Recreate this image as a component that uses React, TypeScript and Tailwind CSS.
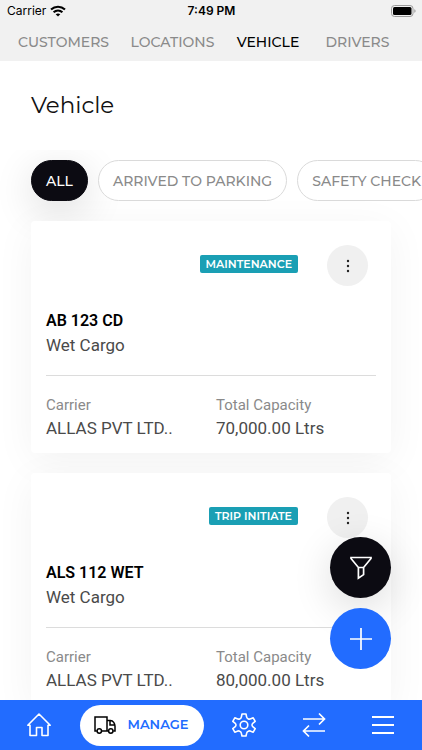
import { useState } from 'react'

interface Vehicle {
  plate: string
  type: string
  status: string
  carrier: string
  capacity: string
}

const tabs = ['CUSTOMERS', 'LOCATIONS', 'VEHICLE', 'DRIVERS']

const filters = ['ALL', 'ARRIVED TO PARKING', 'SAFETY CHECK']

const vehicles: Vehicle[] = [
  {
    plate: 'AB 123 CD',
    type: 'Wet Cargo',
    status: 'MAINTENANCE',
    carrier: 'ALLAS PVT LTD..',
    capacity: '70,000.00 Ltrs',
  },
  {
    plate: 'ALS 112 WET',
    type: 'Wet Cargo',
    status: 'TRIP INITIATE',
    carrier: 'ALLAS PVT LTD..',
    capacity: '80,000.00 Ltrs',
  },
]

function StatusBar() {
  return (
    <div className="grid h-[22px] grid-cols-3 items-center pl-[7px] pr-[6px] font-['Inter',sans-serif] text-black">
      <div className="flex items-center gap-1 text-xs">
        <span>Carrier</span>
        <svg width="16" height="12" viewBox="0 0 16 12" fill="none" stroke="currentColor" strokeWidth="2.1">
          <path d="M1 4.6C5 .8 11 .8 15 4.6" />
          <path d="M3.6 7.3c2.5-2.3 6.3-2.3 8.8 0" />
          <path d="M8 11.6 5.7 9.2c1.3-1.1 3.3-1.1 4.6 0z" fill="currentColor" stroke="none" />
        </svg>
      </div>
      <div className="whitespace-nowrap text-center text-xs font-semibold">7:49 PM</div>
      <svg className="justify-self-end" width="25" height="12" viewBox="0 0 25 12" fill="none">
        <rect x="0.5" y="0.5" width="21.5" height="11" rx="3" stroke="#9b9b9b" />
        <rect x="2" y="2" width="18.5" height="8" rx="1.5" fill="#000" />
        <path d="M23.300 4.200v3.600c.9-.3 1.300-1 1.300-1.800s-.4-1.500-1.300-1.800z" fill="#9b9b9b" />
      </svg>
    </div>
  )
}

function VehicleCard({ vehicle }: { vehicle: Vehicle }) {
  return (
    <article className="rounded-[4px] bg-white px-[15px] pb-[13px] pt-6 font-['Roboto',sans-serif] shadow-[0_8px_40px_rgba(0,0,0,0.05)]">
      <div className="flex items-center justify-end gap-[29px] pr-2">
        <span className="mb-1 rounded-[2px] bg-[#1a9fb4] px-[6px] font-['Montserrat','Inter',sans-serif] text-[11px] font-semibold leading-[18px] text-white">
          {vehicle.status}
        </span>
        <button
          aria-label={`Options for ${vehicle.plate}`}
          className="flex h-[41px] w-[41px] items-center justify-center rounded-full bg-[#f0f0f0]"
        >
          <svg width="4" height="14" viewBox="0 0 4 14" fill="#222">
            <circle cx="2" cy="2" r="1.2" />
            <circle cx="2" cy="7" r="1.2" />
            <circle cx="2" cy="12" r="1.2" />
          </svg>
        </button>
      </div>
      <h2 className="mt-[23px] text-base font-semibold leading-6 text-black">{vehicle.plate}</h2>
      <p className="text-[17px] leading-6 text-[#4a4a4a]">{vehicle.type}</p>
      <dl className="mt-[18px] grid grid-cols-2 gap-x-[10px] border-t border-[#dcdcdc] pt-[18px]">
        <div>
          <dt className="text-[15px] leading-[22px] text-[#8a8a8a]">Carrier</dt>
          <dd className="text-[17px] leading-6 text-[#4a4a4a]">{vehicle.carrier}</dd>
        </div>
        <div>
          <dt className="text-[15px] leading-[22px] text-[#8a8a8a]">Total Capacity</dt>
          <dd className="text-[17px] leading-6 text-[#4a4a4a]">{vehicle.capacity}</dd>
        </div>
      </dl>
    </article>
  )
}

function BottomNav() {
  return (
    <nav className="relative z-10 flex h-[50px] shrink-0 items-center bg-[#226cff] px-1 text-white">
      <a href="#home" aria-label="Home" className="flex flex-1 justify-center">
        <svg width="26" height="26" viewBox="0 0 26 26" fill="none" stroke="currentColor" strokeWidth="1.6">
          <path d="M1.800 13.200 13 2l11.200 11.200H22v10.300h-6v-8h-5.500v8H4V13.200z" strokeLinejoin="round" />
        </svg>
      </a>
      <a
        href="#manage"
        className="mx-1.5 flex h-[41px] w-[124px] items-center justify-center gap-[11px] rounded-full bg-white text-[13px] font-semibold text-[#226cff]"
      >
        <svg width="22" height="18" viewBox="0 0 22 18" fill="none" stroke="#000" strokeWidth="1.5">
          <path d="M2.800 15H1V1h12v14H7.800M13 4.500h3.500c2.600 0 4.500 3.200 4.500 5.800V15h-1.700M14.300 15H13M16 4.500V9h4.800" />
          <circle cx="5.3" cy="15" r="2.2" />
          <circle cx="16.8" cy="15" r="2.2" />
        </svg>
        MANAGE
      </a>
      <a href="#settings" aria-label="Settings" className="flex flex-1 justify-center">
        <svg
          width="26"
          height="26"
          viewBox="0 0 26 26"
          fill="none"
          stroke="currentColor"
          strokeWidth="1.6"
          strokeLinejoin="round"
        >
          <path d="M11 2h4l.6 2.800q.3 1.500 1.700 2.100 1.200.5 2.500-.1l2.400-1 2 3.500-2.200 1.800q-1 .8-1 1.900t1 1.900l2.200 1.800-2 3.500-2.400-1q-1.300-.6-2.500.1-1.400.6-1.700 2.100L15 24h-4l-.6-2.600q-.3-1.500-1.700-2.100-1.200-.7-2.500-.1l-2.400 1-2-3.500L4 14.900q1-.8 1-1.900t-1-1.900L1.800 9.300l2-3.500 2.400 1q1.300.6 2.500.1 1.400-.6 1.700-2.100z" />
          <circle cx="13" cy="13" r="3.8" />
        </svg>
      </a>
      <a href="#transfers" aria-label="Transfers" className="flex flex-1 justify-center">
        <svg width="24" height="26" viewBox="0 0 24 26" fill="none" stroke="currentColor" strokeWidth="1.7">
          <path d="M1 7h21.500M17 1.500 22.500 7 17 12.500M23 19H1.500M7 13.500 1.500 19 7 24.500" />
        </svg>
      </a>
      <a href="#menu" aria-label="Menu" className="flex flex-1 justify-center">
        <svg width="22" height="18" viewBox="0 0 22 18" stroke="currentColor" strokeWidth="1.8">
          <path d="M0 1h22M0 9h22M0 17h22" />
        </svg>
      </a>
    </nav>
  )
}

export default function App() {
  const [activeTab, setActiveTab] = useState('VEHICLE')
  const [activeFilter, setActiveFilter] = useState('ALL')

  return (
    <div className="relative flex h-screen flex-col overflow-hidden bg-white font-['Montserrat','Inter',sans-serif]">
      <header className="relative z-10 shrink-0 bg-[#f1f1f1]">
        <StatusBar />
        <div className="grid h-[39px] grid-cols-[111fr_107fr_84fr_95fr] pl-2 pr-[17px]">
          {tabs.map((tab) => (
            <button
              key={tab}
              onClick={() => setActiveTab(tab)}
              className={`text-sm font-medium ${activeTab === tab ? 'text-black' : 'text-[#8a8a8a]'}`}
            >
              {tab}
            </button>
          ))}
        </div>
      </header>

      <main className="min-h-0 flex-1 overflow-y-auto overflow-x-hidden [scrollbar-width:none]">
        <h1 className="px-[31px] pb-[29px] pt-7 text-[23px] leading-8 text-[#111]">Vehicle</h1>

        {/* Status filters */}
        <div className="-mb-5 flex gap-[10px] overflow-x-auto px-[31px] pb-10 pt-[10px] [scrollbar-width:none]">
          {filters.map((filter) => (
            <button
              key={filter}
              onClick={() => setActiveFilter(filter)}
              className={`h-[41px] shrink-0 rounded-full border px-[14px] text-sm font-medium ${
                activeFilter === filter
                  ? 'border-[#0c0b12] bg-[#0c0b12] text-white shadow-[0_10px_40px_rgba(0,0,0,0.14)]'
                  : 'border-[#dadada] bg-white text-[#8a8a8a]'
              }`}
            >
              {filter}
            </button>
          ))}
        </div>

        <div className="flex flex-col gap-5 px-[31px] pb-5">
          {vehicles.map((vehicle) => (
            <VehicleCard key={vehicle.plate} vehicle={vehicle} />
          ))}
        </div>
      </main>

      {/* Floating actions */}
      <div className="absolute bottom-[81px] right-[31px] flex flex-col gap-[10px] text-white">
        <button
          aria-label="Filter vehicles"
          className="flex h-[61px] w-[61px] items-center justify-center rounded-full bg-[#0c0b12] shadow-[0_10px_40px_rgba(0,0,0,0.14)]"
        >
          <svg width="22" height="24" viewBox="0 0 22 24" fill="none" stroke="currentColor" strokeWidth="1.7">
            <path d="M1 1.500h20v1l-7.400 9H8.400L1 2.500zM8.400 11.500v10.700l5.200-3.600v-7.100" />
          </svg>
        </button>
        <button
          aria-label="Add vehicle"
          className="flex h-[61px] w-[61px] items-center justify-center rounded-full bg-[#226cff]"
        >
          <svg width="22" height="22" viewBox="0 0 22 22" stroke="currentColor" strokeWidth="1.7">
            <path d="M11 0v22M0 11h22" />
          </svg>
        </button>
      </div>

      <BottomNav />
    </div>
  )
}
